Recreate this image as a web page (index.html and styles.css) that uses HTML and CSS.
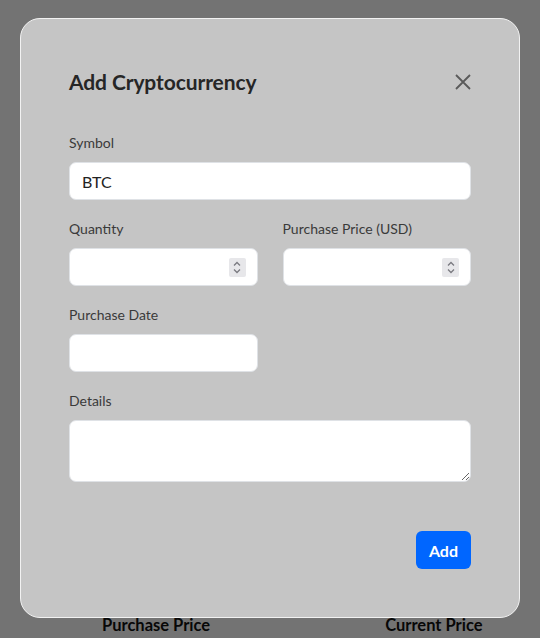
FILE: index.html
```html
<!DOCTYPE html>
<html lang="en">
<head>
<meta charset="utf-8">
<title>Add Cryptocurrency</title>
<link rel="stylesheet" href="styles.css">
</head>
<body>
<main class="page">
  <div class="table-head">
    <span class="col col-purchase">Purchase Price</span>
    <span class="col col-current">Current Price</span>
  </div>
</main>

<div class="overlay">
  <form class="modal">
    <div class="modal-header">
      <h2 class="modal-title">Add Cryptocurrency</h2>
      <button type="button" class="close-btn" aria-label="Close">
        <svg width="16" height="16" viewBox="0 0 16 16"><path d="M1 1 L15 15 M15 1 L1 15" stroke="#5a5a5a" stroke-width="1.8" fill="none"/></svg>
      </button>
    </div>

    <div class="field">
      <label class="label">Symbol</label>
      <input class="input" type="text" value="BTC">
    </div>

    <div class="row">
      <div class="field">
        <label class="label">Quantity</label>
        <div class="input num">
          <input class="num-input" type="text">
          <span class="spinner">
            <svg width="16" height="19" viewBox="0 0 16 19"><path d="M5 7.5 L8 4.5 L11 7.5 M5 11.5 L8 14.5 L11 11.5" stroke="#7a7a80" stroke-width="1.3" fill="none"/></svg>
          </span>
        </div>
      </div>
      <div class="field">
        <label class="label">Purchase Price (USD)</label>
        <div class="input num">
          <input class="num-input" type="text">
          <span class="spinner">
            <svg width="16" height="19" viewBox="0 0 16 19"><path d="M5 7.5 L8 4.5 L11 7.5 M5 11.5 L8 14.5 L11 11.5" stroke="#7a7a80" stroke-width="1.3" fill="none"/></svg>
          </span>
        </div>
      </div>
    </div>

    <div class="row">
      <div class="field">
        <label class="label">Purchase Date</label>
        <input class="input" type="text">
      </div>
    </div>

    <div class="field">
      <label class="label">Details</label>
      <textarea class="input textarea"></textarea>
    </div>

    <div class="actions">
      <button type="button" class="add-btn">Add</button>
    </div>
  </form>
</div>
</body>
</html>
```

FILE: styles.css
```css
* { box-sizing: border-box; }

html, body {
  margin: 0;
  padding: 0;
  height: 100%;
}

body {
  background: #ffffff;
  font-family: "Lato", "Noto Sans", sans-serif;
  color: #2a2a2a;
  overflow: hidden;
}

.page {
  padding-top: 615px;
}

.table-head {
  display: flex;
  font-weight: 700;
  font-size: 16.5px;
  line-height: 20px;
  color: #111;
}

.col-purchase { margin-left: 102px; }
.col-current { margin-left: 175px; }

.overlay {
  position: fixed;
  inset: 0;
  background: rgba(0, 0, 0, 0.55);
  display: flex;
  align-items: flex-start;
  justify-content: center;
  padding-top: 18px;
}

.modal {
  width: 500px;
  background: #c5c5c5;
  border: 1px solid #f2f2f2;
  border-radius: 20px;
  padding: 48px;
  display: flex;
  flex-direction: column;
  gap: 18px;
}

.modal-header {
  display: flex;
  align-items: center;
  justify-content: space-between;
  height: 24px;
  margin-top: 2px;
  margin-bottom: 21px;
}

.modal-title {
  margin: 0;
  font-size: 21px;
  font-weight: 700;
  color: #262626;
  letter-spacing: -0.1px;
}

.close-btn {
  border: 0;
  background: none;
  padding: 0;
  width: 16px;
  height: 16px;
  display: flex;
  margin-top: 1px;
}

.field {
  display: flex;
  flex-direction: column;
  gap: 9px;
  min-width: 0;
}

.label {
  font-size: 14px;
  line-height: 20px;
  padding-top: 1px;
  color: #3a3a3a;
}

.row {
  display: grid;
  grid-template-columns: minmax(0, 1fr) minmax(0, 1fr);
  column-gap: 25px;
}

.input {
  height: 38px;
  width: 100%;
  background: #fff;
  border: 1px solid #dfe2e6;
  border-radius: 7px;
  font-family: inherit;
  font-size: 16px;
  color: #222;
  padding: 0 12px;
  outline: none;
}

.num {
  display: flex;
  align-items: center;
  padding-right: 11px;
}

.num-input {
  flex: 1;
  width: 0;
  min-width: 0;
  border: 0;
  outline: none;
  background: transparent;
  font: inherit;
  padding: 0;
}

.spinner {
  flex: none;
  width: 17px;
  height: 19px;
  background: #e7e7ea;
  border-radius: 2px;
  display: flex;
  align-items: center;
  justify-content: center;
}

.textarea {
  height: 62px;
  padding: 8px 12px;
  resize: vertical;
}

.actions {
  display: flex;
  justify-content: flex-end;
  margin-top: 31px;
}

.add-btn {
  height: 38px;
  padding: 0 13px;
  border: 0;
  border-radius: 6px;
  background: #0066ff;
  color: #fff;
  font-family: inherit;
  font-size: 16px;
  font-weight: 700;
}
```
